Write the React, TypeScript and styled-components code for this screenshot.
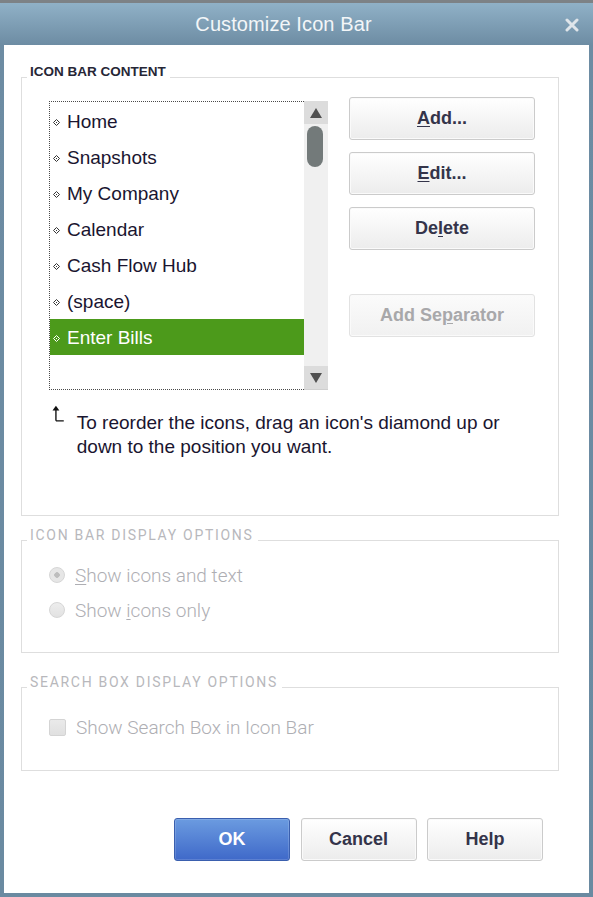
import styled, { createGlobalStyle } from "styled-components"

const GlobalStyle = createGlobalStyle`
  html, body {
    margin: 0;
    padding: 0;
    background: #6a8aa1;
  }
  body {
    font-family: "Liberation Sans", Arial, sans-serif;
  }
  * {
    box-sizing: border-box;
  }
`

const Frame = styled.div`
  width: 593px;
  height: 897px;
  display: flex;
  flex-direction: column;
  border-top: 3px solid #7d8286;
  padding: 0 4px 4px 4px;
  background: linear-gradient(#90b1c7 0px, #6d8ca3 42px, #6a8aa1 100%);
`

const TitleBar = styled.div`
  height: 42px;
  display: flex;
  align-items: center;
  justify-content: center;
  position: relative;
  padding-right: 26px;
`

const Title = styled.div`
  font-family: "Liberation Sans", Arial, sans-serif;
  font-size: 20px;
  color: #f3f6f8;
  letter-spacing: 0.1px;
`

const CloseButton = styled.div`
  position: absolute;
  right: 10px;
  top: 15px;
  width: 14px;
  height: 14px;
  display: flex;
`

const Body = styled.div`
  flex: 1;
  background: #fff;
  display: flex;
  flex-direction: column;
  padding: 19px 30px 32px 17px;
`

const Group = styled.fieldset<{ $gap?: number }>`
  margin: ${(p) => p.$gap ?? 0}px 0 0 0;
  padding: 0;
  border: 1px solid #dedede;
  min-width: 0;
`

const Legend = styled.legend<{ $disabled?: boolean }>`
  margin-left: 5px;
  padding: 0 4px 10px 3px;
  line-height: 16px;
  font-family: ${(p) =>
    p.$disabled ? `Roboto, "Liberation Sans", sans-serif` : `"Liberation Sans", Arial, sans-serif`};
  font-size: ${(p) => (p.$disabled ? 14 : 13.5)}px;
  font-weight: ${(p) => (p.$disabled ? 400 : 700)};
  letter-spacing: ${(p) => (p.$disabled ? "1.7px" : "0")};
  color: ${(p) => (p.$disabled ? "#b8b8bc" : "#262636")};
`

const GroupInner = styled.div<{ $pad: string }>`
  padding: ${(p) => p.$pad};
`

const ContentRow = styled.div`
  display: flex;
  align-items: flex-start;
  gap: 21px;
`

const ListBox = styled.div`
  width: 279px;
  height: 289px;
  display: flex;
`

const ListItems = styled.div`
  width: 255px;
  height: 100%;
  border: 1px dotted #4a4a4a;
  border-right: none;
  padding-top: 1px;
`

const ListItem = styled.div<{ $selected?: boolean }>`
  height: 36px;
  display: flex;
  align-items: center;
  gap: 7px;
  padding-left: 3px;
  padding-top: 2px;
  font-size: 19px;
  color: ${(p) => (p.$selected ? "#ffffff" : "#1a1530")};
  background: ${(p) => (p.$selected ? "#4c9a1b" : "transparent")};
`

const ScrollBar = styled.div`
  width: 24px;
  height: 100%;
  display: flex;
  flex-direction: column;
  background: #f0f0f0;
  border-bottom: 1px solid #cfcfcf;
`

const ScrollArrow = styled.div`
  height: 23px;
  background: #dcdcdc;
  display: flex;
  align-items: center;
  justify-content: center;
`

const ScrollTrack = styled.div`
  flex: 1;
  padding: 2px 0 0 3px;
`

const ScrollThumb = styled.div`
  width: 16px;
  height: 41px;
  border-radius: 8px;
  background: #737a7a;
`

const ButtonColumn = styled.div`
  display: flex;
  flex-direction: column;
  margin-top: -4px;
`

const Button = styled.button<{ $primary?: boolean; $gap?: number; $w?: number }>`
  width: ${(p) => p.$w ?? 186}px;
  height: 43px;
  margin-top: ${(p) => p.$gap ?? 0}px;
  border-radius: 3px;
  border: 1px solid ${(p) => (p.$primary ? "#3a5fae" : "#cbcbcb")};
  background: ${(p) =>
    p.$primary
      ? "linear-gradient(#6b9be0, #3f69c9)"
      : "linear-gradient(#ffffff, #ececec)"};
  box-shadow: inset 0 0 0 1px ${(p) => (p.$primary ? "rgba(255,255,255,0.15)" : "#fafafa")};
  font-family: "Liberation Sans", Arial, sans-serif;
  font-size: 18px;
  font-weight: 700;
  color: ${(p) => (p.$primary ? "#ffffff" : "#34344a")};
  padding: 0;
  cursor: default;

  &:disabled {
    color: #a8a8aa;
    border-color: #e2e2e2;
    background: linear-gradient(#fbfbfb, #f1f1f1);
  }
`

const Mnemonic = styled.span`
  text-decoration: underline;
  text-underline-offset: 2px;
  text-decoration-thickness: 1px;
`

const Hint = styled.div`
  display: flex;
  margin-top: 15px;
  padding-left: 3px;
  gap: 12px;
`

const HintText = styled.div`
  width: 470px;
  margin-top: 6px;
  font-size: 19px;
  line-height: 24px;
  color: #1a1530;
`

const OptionRow = styled.label<{ $gap?: number }>`
  height: 24px;
  display: flex;
  align-items: center;
  gap: 10px;
  margin-top: ${(p) => p.$gap ?? 0}px;
  font-family: Roboto, "Liberation Sans", sans-serif;
  font-size: 19px;
  font-weight: 300;
  color: #aeaeb3;
`

const Radio = styled.span<{ $checked?: boolean }>`
  width: 16px;
  height: 16px;
  border-radius: 50%;
  border: 1px solid #d6d6d6;
  background: radial-gradient(circle, #bdbdbd 0 2.5px, #e6e6e6 3px, #e6e6e6 100%);
  ${(p) => (p.$checked ? "" : "background: linear-gradient(#ededed, #e2e2e2);")}
`

const CheckBox = styled.span`
  width: 17px;
  height: 17px;
  border-radius: 2px;
  border: 1px solid #d4d4d4;
  background: linear-gradient(#eaeaea, #e0e0e0);
`

const Footer = styled.div`
  margin-top: 47px;
  display: flex;
  justify-content: flex-end;
  gap: 10.5px;
  padding-right: 16px;
`

function Diamond({ color }: { color: string }) {
  return (
    <svg width="7" height="7" viewBox="0 0 7 7">
      <polygon points="3.5,0.5 6.5,3.5 3.5,6.5 0.5,3.5" fill="none" stroke={color} strokeWidth="1" />
      <rect x="3" y="3" width="1" height="1" fill={color} />
    </svg>
  )
}

const items = ["Home", "Snapshots", "My Company", "Calendar", "Cash Flow Hub", "(space)", "Enter Bills"]

export default function App() {
  return (
    <>
      <GlobalStyle />
      <Frame>
        <TitleBar>
          <Title>Customize Icon Bar</Title>
          <CloseButton>
            <svg width="14" height="14" viewBox="0 0 14 14">
              <path d="M2 2 L12 12 M12 2 L2 12" stroke="#dfe5ea" strokeWidth="3" strokeLinecap="round" />
            </svg>
          </CloseButton>
        </TitleBar>
        <Body>
          <Group>
            <Legend>ICON BAR CONTENT</Legend>
            <GroupInner $pad="11px 20px 56px 27px">
              <ContentRow>
                <ListBox>
                  <ListItems>
                    {items.map((item) => (
                      <ListItem key={item} $selected={item === "Enter Bills"}>
                        <Diamond color={item === "Enter Bills" ? "#ffffff" : "#333333"} />
                        {item}
                      </ListItem>
                    ))}
                  </ListItems>
                  <ScrollBar>
                    <ScrollArrow>
                      <svg width="14" height="12" viewBox="0 0 14 12">
                        <polygon points="7,1 13,11 1,11" fill="#505050" />
                      </svg>
                    </ScrollArrow>
                    <ScrollTrack>
                      <ScrollThumb />
                    </ScrollTrack>
                    <ScrollArrow>
                      <svg width="14" height="12" viewBox="0 0 14 12">
                        <polygon points="1,1 13,1 7,11" fill="#505050" />
                      </svg>
                    </ScrollArrow>
                  </ScrollBar>
                </ListBox>
                <ButtonColumn>
                  <Button>
                    <Mnemonic>A</Mnemonic>dd...
                  </Button>
                  <Button $gap={12}>
                    <Mnemonic>E</Mnemonic>dit...
                  </Button>
                  <Button $gap={12}>
                    De<Mnemonic>l</Mnemonic>ete
                  </Button>
                  <Button $gap={44} disabled>
                    Add Se<Mnemonic>p</Mnemonic>arator
                  </Button>
                </ButtonColumn>
              </ContentRow>
              <Hint>
                <svg width="13" height="17" viewBox="0 0 13 17">
                  <path d="M4 16 L4 2 M4 16 L12 16" stroke="#111" strokeWidth="1.4" fill="none" />
                  <polygon points="4,0.5 7.5,5.5 0.5,5.5" fill="#111" />
                </svg>
                <HintText>
                  To reorder the icons, drag an icon's diamond up or down to the position you want.
                </HintText>
              </Hint>
            </GroupInner>
          </Group>

          <Group $gap={11}>
            <Legend $disabled>ICON BAR DISPLAY OPTIONS</Legend>
            <GroupInner $pad="10px 20px 30px 27px">
              <OptionRow>
                <Radio $checked />
                <span>
                  <Mnemonic>S</Mnemonic>how icons and text
                </span>
              </OptionRow>
              <OptionRow $gap={11}>
                <Radio />
                <span>
                  Show <Mnemonic>i</Mnemonic>cons only
                </span>
              </OptionRow>
            </GroupInner>
          </Group>

          <Group $gap={21}>
            <Legend $disabled>SEARCH BOX DISPLAY OPTIONS</Legend>
            <GroupInner $pad="15px 20px 31px 27px">
              <OptionRow>
                <CheckBox />
                <span>Show Search Box in Icon Bar</span>
              </OptionRow>
            </GroupInner>
          </Group>

          <Footer>
            <Button $primary $w={116}>OK</Button>
            <Button $w={116}>Cancel</Button>
            <Button $w={116}>Help</Button>
          </Footer>
        </Body>
      </Frame>
    </>
  )
}
